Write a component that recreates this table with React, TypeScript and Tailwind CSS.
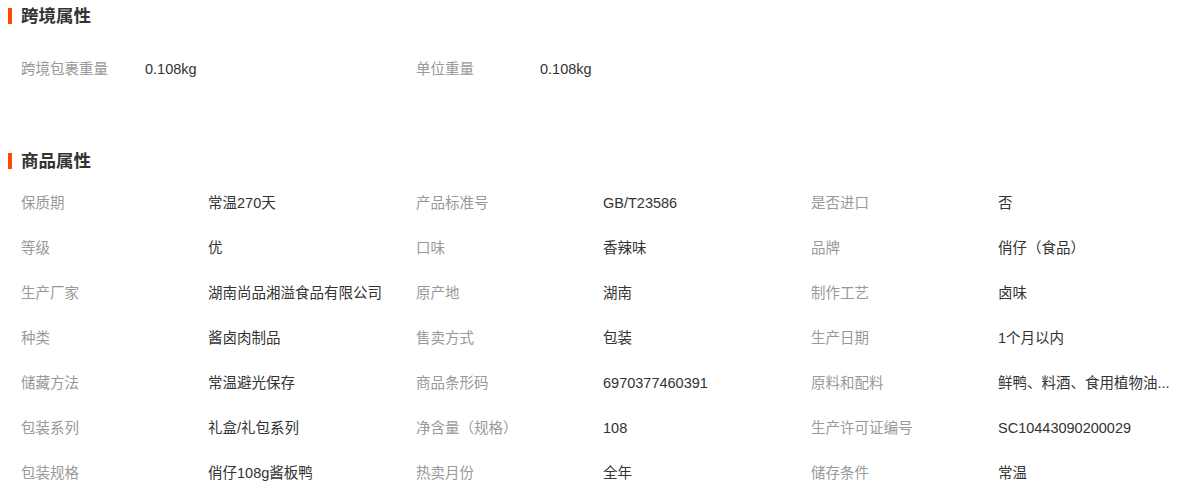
import React from 'react';

interface Attr {
  label: string;
  value: string;
}

const crossBorder: Attr[] = [
  { label: '跨境包裹重量', value: '0.108kg' },
  { label: '单位重量', value: '0.108kg' },
];

const productAttrs: Attr[] = [
  { label: '保质期', value: '常温270天' },
  { label: '产品标准号', value: 'GB/T23586' },
  { label: '是否进口', value: '否' },
  { label: '等级', value: '优' },
  { label: '口味', value: '香辣味' },
  { label: '品牌', value: '俏仔（食品）' },
  { label: '生产厂家', value: '湖南尚品湘溢食品有限公司' },
  { label: '原产地', value: '湖南' },
  { label: '制作工艺', value: '卤味' },
  { label: '种类', value: '酱卤肉制品' },
  { label: '售卖方式', value: '包装' },
  { label: '生产日期', value: '1个月以内' },
  { label: '储藏方法', value: '常温避光保存' },
  { label: '商品条形码', value: '6970377460391' },
  { label: '原料和配料', value: '鲜鸭、料酒、食用植物油...' },
  { label: '包装系列', value: '礼盒/礼包系列' },
  { label: '净含量（规格）', value: '108' },
  { label: '生产许可证编号', value: 'SC10443090200029' },
  { label: '包装规格', value: '俏仔108g酱板鸭' },
  { label: '热卖月份', value: '全年' },
  { label: '储存条件', value: '常温' },
];

const SectionTitle: React.FC<{ title: string }> = ({ title }) => (
  <div className="flex items-center h-8 pl-2">
    <span className="w-1 h-4 bg-[#ff4a00]" />
    <h3 className="ml-[9px] text-[17.5px] font-bold text-[#333]">{title}</h3>
  </div>
);

export default function App() {
  return (
    <div
      className="w-[1193px] h-[485px] overflow-hidden bg-white text-[14.5px]"
      style={{ fontFamily: '"Liberation Sans", Arial, "Noto Sans CJK SC", sans-serif' }}
    >
      {/* 跨境属性 */}
      <SectionTitle title="跨境属性" />
      <div className="grid grid-cols-[395px_395px_395px] pl-[21px] mt-[15px]">
        {crossBorder.map(a => (
          <div key={a.label} className="flex items-center h-[45px]">
            <span className="w-[124px] shrink-0 text-[#999]">{a.label}</span>
            <span className="text-[#333]">{a.value}</span>
          </div>
        ))}
      </div>

      {/* 商品属性 */}
      <div className="mt-[53px]">
        <SectionTitle title="商品属性" />
      </div>
      <div className="grid grid-cols-[395px_395px_395px] pl-[21px] mt-[4px]">
        {productAttrs.map(a => (
          <div key={a.label} className="flex items-center h-[45px]">
            <span className="w-[187px] shrink-0 text-[#999]">{a.label}</span>
            <span className="whitespace-nowrap text-[#333]">{a.value}</span>
          </div>
        ))}
      </div>
    </div>
  );
}
